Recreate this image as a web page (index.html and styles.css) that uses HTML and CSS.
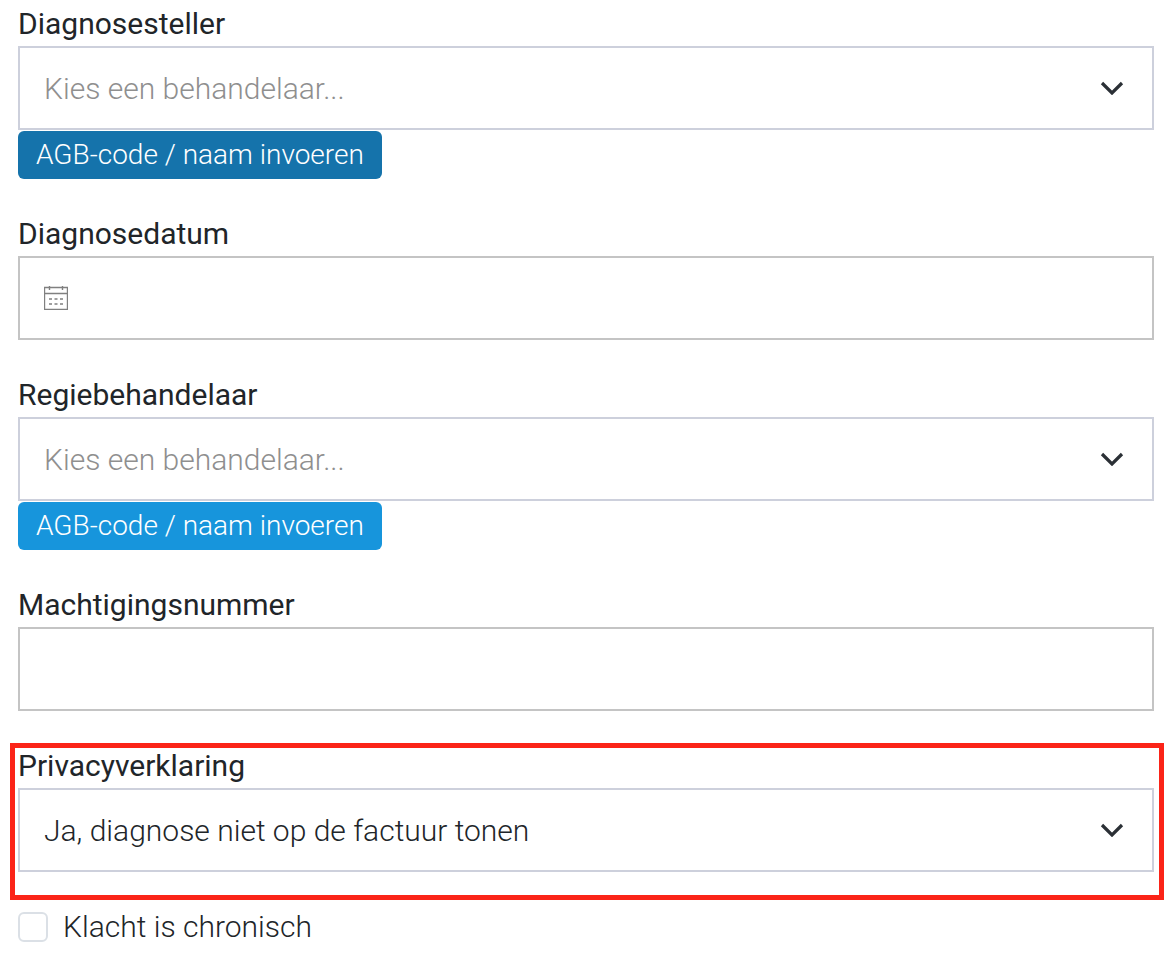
FILE: index.html
```html
<!DOCTYPE html>
<html lang="nl">
<head>
  <meta charset="UTF-8" />
  <title>Diagnose</title>
  <link rel="stylesheet" href="styles.css">
</head>
<body>
  <form class="form">
    <div class="field">
      <label>Diagnosesteller</label>
      <div class="select">
        <span class="placeholder">Kies een behandelaar...</span>
        <svg class="chevron" viewBox="0 0 24 14"><path d="M2 2l10 10L22 2" /></svg>
      </div>
      <button type="button" class="agb dark">AGB-code / naam invoeren</button>
    </div>

    <div class="field">
      <label>Diagnosedatum</label>
      <div class="input">
        <svg class="calendar" viewBox="0 0 24 24">
          <path d="M.5 1.5h23v22H.5zM.5 7.5h23" />
          <path d="M5.5 0v4M18.5 0v4" />
          <path class="dots" d="M5 13h3M10.5 13h3M16 13h3M5 18h3M10.5 18h3M16 18h3" />
        </svg>
      </div>
    </div>

    <div class="field">
      <label>Regiebehandelaar</label>
      <div class="select">
        <span class="placeholder">Kies een behandelaar...</span>
        <svg class="chevron" viewBox="0 0 24 14"><path d="M2 2l10 10L22 2" /></svg>
      </div>
      <button type="button" class="agb">AGB-code / naam invoeren</button>
    </div>

    <div class="field">
      <label>Machtigingsnummer</label>
      <div class="input"></div>
    </div>

    <div class="field">
      <label>Privacyverklaring</label>
      <div class="select">
        <span class="value">Ja, diagnose niet op de factuur tonen</span>
        <svg class="chevron" viewBox="0 0 24 14"><path d="M2 2l10 10L22 2" /></svg>
      </div>
    </div>

    <div class="check-row">
      <span class="checkbox"></span>
      <span class="check-label">Klacht is chronisch</span>
    </div>
  </form>

  <div class="highlight"></div>
</body>
</html>
```

FILE: styles.css
```css
* {
  margin: 0;
  padding: 0;
  box-sizing: border-box;
}

body {
  font-family: Roboto, "Liberation Sans", sans-serif;
  background-color: #fff;
  color: #212529;
}

.form {
  padding: 4px 16px 0 18px;
}

.field {
  margin-bottom: 35px;
}

.field label {
  display: block;
  height: 40px;
  margin-bottom: 2px;
  font-size: 30px;
  line-height: 40px;
}

.select,
.input {
  display: flex;
  align-items: center;
  height: 84px;
  padding: 0 28px 0 24px;
  border: 2px solid #cdd0dc;
  font-size: 30px;
  font-weight: 300;
}

.input {
  border-color: #c4c4c4;
}

.placeholder {
  color: #8f8f8f;
}

.chevron {
  width: 24px;
  height: 14px;
  margin-left: auto;
  fill: none;
  stroke: #2b3036;
  stroke-width: 3.2;
}

.calendar {
  width: 24px;
  height: 24px;
  fill: none;
  stroke: #808080;
  stroke-width: 1.4;
}

.calendar .dots {
  stroke-width: 1.6;
}

.agb {
  display: block;
  height: 48px;
  margin-top: 1px;
  padding: 0 18px 2px;
  border: none;
  border-radius: 6px;
  background-color: #1795dc;
  color: #fff;
  font-family: inherit;
  font-size: 28px;
  font-weight: 300;
}

.agb.dark {
  background-color: #1573ab;
}

.check-row {
  display: flex;
  align-items: center;
  gap: 15px;
  height: 40px;
}

.checkbox {
  width: 30px;
  height: 30px;
  border: 2.5px solid #dbe0e6;
  border-radius: 6px;
}

.check-label {
  padding-bottom: 2px;
  font-size: 30px;
  font-weight: 300;
}

.highlight {
  position: absolute;
  left: 10px;
  top: 743px;
  width: 1154px;
  height: 157px;
  border: 5px solid #fb2418;
}
```
